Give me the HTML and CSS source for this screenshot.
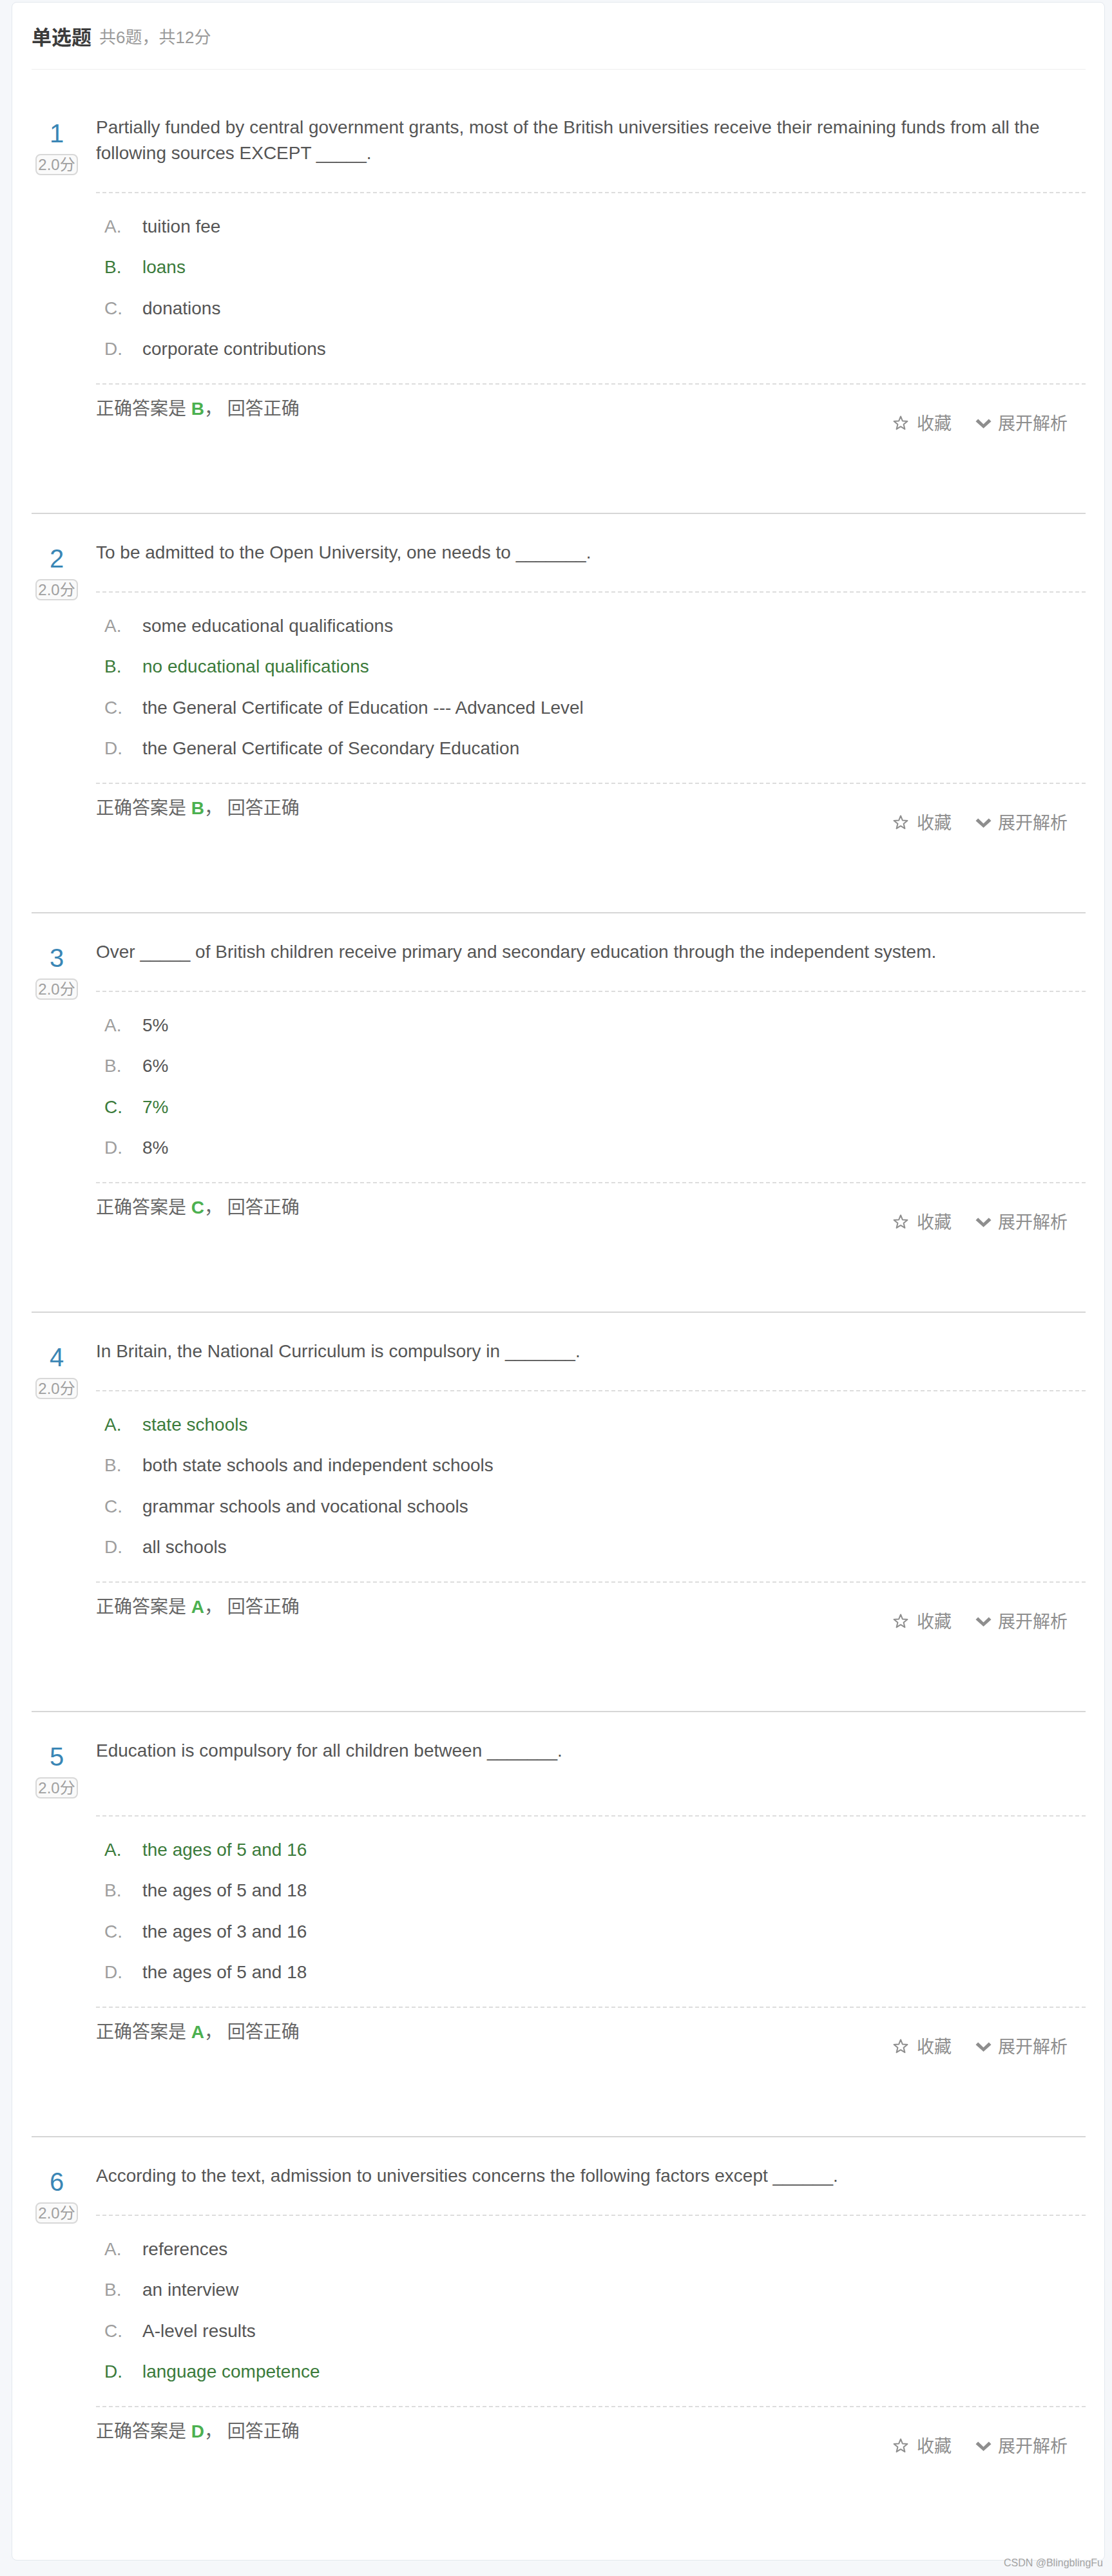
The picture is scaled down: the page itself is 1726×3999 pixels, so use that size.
FILE: index.html
```html
<!DOCTYPE html>
<html lang="zh-CN">
<head>
<meta charset="utf-8">
<title>单选题</title>
<link rel="stylesheet" href="styles.css">
</head>
<body>
<div class="card">
  <div class="sec-head"><span class="sec-title">单选题</span><span class="sec-sub">共6题，共12分</span></div>
  <div class="q-list">

    <div class="q">
      <div class="q-left"><div class="q-num">1</div><span class="q-score">2.0分</span></div>
      <div class="q-body">
        <div class="q-title">Partially funded by central government grants, most of the British universities receive their remaining funds from all the following sources EXCEPT _____.</div>
        <div class="dash"></div>
        <ul class="opts">
          <li class="opt"><span class="opt-k">A.</span>tuition fee</li>
          <li class="opt ok"><span class="opt-k">B.</span>loans</li>
          <li class="opt"><span class="opt-k">C.</span>donations</li>
          <li class="opt"><span class="opt-k">D.</span>corporate contributions</li>
        </ul>
        <div class="dash"></div>
        <div class="ans-row">
          <div class="ans">正确答案是 <b>B</b>， 回答正确</div>
          <div class="acts">
            <span class="act"><svg class="ic-star" viewBox="0 0 24 23"><polygon points="12,1.5 14.8,8.4 22.4,8.9 16.6,13.8 18.4,21.2 12,17.2 5.6,21.2 7.4,13.8 1.6,8.9 9.2,8.4" /></svg>收藏</span>
            <span class="act act2"><svg class="ic-chev" viewBox="0 0 25 15"><path d="M0.5 4.2 L4.2 0.5 L12.5 8.6 L20.8 0.5 L24.5 4.2 L12.5 15 Z" /></svg>展开解析</span>
          </div>
        </div>
      </div>
    </div>

    <div class="q">
      <div class="q-left"><div class="q-num">2</div><span class="q-score">2.0分</span></div>
      <div class="q-body">
        <div class="q-title">To be admitted to the Open University, one needs to _______.</div>
        <div class="dash"></div>
        <ul class="opts">
          <li class="opt"><span class="opt-k">A.</span>some educational qualifications</li>
          <li class="opt ok"><span class="opt-k">B.</span>no educational qualifications</li>
          <li class="opt"><span class="opt-k">C.</span>the General Certificate of Education --- Advanced Level</li>
          <li class="opt"><span class="opt-k">D.</span>the General Certificate of Secondary Education</li>
        </ul>
        <div class="dash"></div>
        <div class="ans-row">
          <div class="ans">正确答案是 <b>B</b>， 回答正确</div>
          <div class="acts">
            <span class="act"><svg class="ic-star" viewBox="0 0 24 23"><polygon points="12,1.5 14.8,8.4 22.4,8.9 16.6,13.8 18.4,21.2 12,17.2 5.6,21.2 7.4,13.8 1.6,8.9 9.2,8.4" /></svg>收藏</span>
            <span class="act act2"><svg class="ic-chev" viewBox="0 0 25 15"><path d="M0.5 4.2 L4.2 0.5 L12.5 8.6 L20.8 0.5 L24.5 4.2 L12.5 15 Z" /></svg>展开解析</span>
          </div>
        </div>
      </div>
    </div>

    <div class="q">
      <div class="q-left"><div class="q-num">3</div><span class="q-score">2.0分</span></div>
      <div class="q-body">
        <div class="q-title">Over _____ of British children receive primary and secondary education through the independent system.</div>
        <div class="dash"></div>
        <ul class="opts">
          <li class="opt"><span class="opt-k">A.</span>5%</li>
          <li class="opt"><span class="opt-k">B.</span>6%</li>
          <li class="opt ok"><span class="opt-k">C.</span>7%</li>
          <li class="opt"><span class="opt-k">D.</span>8%</li>
        </ul>
        <div class="dash"></div>
        <div class="ans-row">
          <div class="ans">正确答案是 <b>C</b>， 回答正确</div>
          <div class="acts">
            <span class="act"><svg class="ic-star" viewBox="0 0 24 23"><polygon points="12,1.5 14.8,8.4 22.4,8.9 16.6,13.8 18.4,21.2 12,17.2 5.6,21.2 7.4,13.8 1.6,8.9 9.2,8.4" /></svg>收藏</span>
            <span class="act act2"><svg class="ic-chev" viewBox="0 0 25 15"><path d="M0.5 4.2 L4.2 0.5 L12.5 8.6 L20.8 0.5 L24.5 4.2 L12.5 15 Z" /></svg>展开解析</span>
          </div>
        </div>
      </div>
    </div>

    <div class="q">
      <div class="q-left"><div class="q-num">4</div><span class="q-score">2.0分</span></div>
      <div class="q-body">
        <div class="q-title">In Britain, the National Curriculum is compulsory in _______.</div>
        <div class="dash"></div>
        <ul class="opts">
          <li class="opt ok"><span class="opt-k">A.</span>state schools</li>
          <li class="opt"><span class="opt-k">B.</span>both state schools and independent schools</li>
          <li class="opt"><span class="opt-k">C.</span>grammar schools and vocational schools</li>
          <li class="opt"><span class="opt-k">D.</span>all schools</li>
        </ul>
        <div class="dash"></div>
        <div class="ans-row">
          <div class="ans">正确答案是 <b>A</b>， 回答正确</div>
          <div class="acts">
            <span class="act"><svg class="ic-star" viewBox="0 0 24 23"><polygon points="12,1.5 14.8,8.4 22.4,8.9 16.6,13.8 18.4,21.2 12,17.2 5.6,21.2 7.4,13.8 1.6,8.9 9.2,8.4" /></svg>收藏</span>
            <span class="act act2"><svg class="ic-chev" viewBox="0 0 25 15"><path d="M0.5 4.2 L4.2 0.5 L12.5 8.6 L20.8 0.5 L24.5 4.2 L12.5 15 Z" /></svg>展开解析</span>
          </div>
        </div>
      </div>
    </div>

    <div class="q">
      <div class="q-left"><div class="q-num">5</div><span class="q-score">2.0分</span></div>
      <div class="q-body">
        <div class="q-title">Education is compulsory for all children between _______.<br>&nbsp;</div>
        <div class="dash"></div>
        <ul class="opts">
          <li class="opt ok"><span class="opt-k">A.</span>the ages of 5 and 16</li>
          <li class="opt"><span class="opt-k">B.</span>the ages of 5 and 18</li>
          <li class="opt"><span class="opt-k">C.</span>the ages of 3 and 16</li>
          <li class="opt"><span class="opt-k">D.</span>the ages of 5 and 18</li>
        </ul>
        <div class="dash"></div>
        <div class="ans-row">
          <div class="ans">正确答案是 <b>A</b>， 回答正确</div>
          <div class="acts">
            <span class="act"><svg class="ic-star" viewBox="0 0 24 23"><polygon points="12,1.5 14.8,8.4 22.4,8.9 16.6,13.8 18.4,21.2 12,17.2 5.6,21.2 7.4,13.8 1.6,8.9 9.2,8.4" /></svg>收藏</span>
            <span class="act act2"><svg class="ic-chev" viewBox="0 0 25 15"><path d="M0.5 4.2 L4.2 0.5 L12.5 8.6 L20.8 0.5 L24.5 4.2 L12.5 15 Z" /></svg>展开解析</span>
          </div>
        </div>
      </div>
    </div>

    <div class="q">
      <div class="q-left"><div class="q-num">6</div><span class="q-score">2.0分</span></div>
      <div class="q-body">
        <div class="q-title">According to the text, admission to universities concerns the following factors except ______.</div>
        <div class="dash"></div>
        <ul class="opts">
          <li class="opt"><span class="opt-k">A.</span>references</li>
          <li class="opt"><span class="opt-k">B.</span>an interview</li>
          <li class="opt"><span class="opt-k">C.</span>A-level results</li>
          <li class="opt ok"><span class="opt-k">D.</span>language competence</li>
        </ul>
        <div class="dash"></div>
        <div class="ans-row">
          <div class="ans">正确答案是 <b>D</b>， 回答正确</div>
          <div class="acts">
            <span class="act"><svg class="ic-star" viewBox="0 0 24 23"><polygon points="12,1.5 14.8,8.4 22.4,8.9 16.6,13.8 18.4,21.2 12,17.2 5.6,21.2 7.4,13.8 1.6,8.9 9.2,8.4" /></svg>收藏</span>
            <span class="act act2"><svg class="ic-chev" viewBox="0 0 25 15"><path d="M0.5 4.2 L4.2 0.5 L12.5 8.6 L20.8 0.5 L24.5 4.2 L12.5 15 Z" /></svg>展开解析</span>
          </div>
        </div>
      </div>
    </div>

  </div>
  <div class="watermark">CSDN @BlingblingFu</div>
</div>
</body>
</html>
```

FILE: styles.css
```css
* { box-sizing: border-box; }
html, body { margin: 0; padding: 0; }
body {
  background: #f5f7fa;
  font-family: "Liberation Sans", "Noto Sans CJK SC", sans-serif;
  color: #555;
  padding: 3px 11px 24px 18px;
}
.card {
  position: relative;
  background: #fff;
  border: 1px solid #e3e8ee;
  border-radius: 8px;
  padding: 0 29px 38px 30px;
}
.sec-head {
  height: 104px;
  display: flex;
  align-items: center;
  border-bottom: 1px solid #eeeeee;
}
.sec-title {
  font-size: 31px;
  font-weight: bold;
  color: #3c3c3c;
}
.sec-sub {
  font-size: 26px;
  color: #9a9a9a;
  margin-left: 12px;
}
.q-list { padding-top: 30px; }
.q {
  display: flex;
  padding: 40px 0 118px;
  border-bottom: 2px solid #d6d6d6;
}
.q:last-child { border-bottom: none; }
.q-left {
  width: 78px;
  flex: none;
  text-align: center;
}
.q-num {
  font-size: 40px;
  line-height: 44px;
  padding-top: 7px;
  color: #3a86b5;
}
.q-score {
  display: inline-block;
  margin-top: 10px;
  font-size: 24px;
  line-height: 27px;
  padding: 1px 2px;
  border: 2px solid #d8d8d8;
  border-radius: 8px;
  background: #fafafa;
  color: #a0a0a0;
}
.q-body {
  flex: 1;
  margin-left: 22px;
  min-width: 0;
}
.q-title {
  font-size: 28px;
  line-height: 40px;
  color: #555;
  padding-bottom: 40px;
}
.dash {
  height: 2px;
  background-image: linear-gradient(to right, #dddddd 0 6px, transparent 6px 10px);
  background-size: 10px 2px;
  background-repeat: repeat-x;
}
.opts {
  list-style: none;
  margin: 0;
  padding: 20px 0 21px;
}
.opt {
  font-size: 28px;
  line-height: 40px;
  padding: 11.75px 0 11.75px 13px;
  color: #555;
}
.opt-k {
  display: inline-block;
  width: 59px;
  color: #9e9e9e;
}
.opt.ok, .opt.ok .opt-k { color: #3b7b3b; }
.ans-row {
  display: flex;
  justify-content: space-between;
  align-items: flex-start;
  padding-top: 18px;
}
.ans {
  font-size: 28px;
  line-height: 40px;
  color: #666;
}
.ans b { color: #4cb050; }
.acts {
  display: flex;
  align-items: center;
  margin-top: 23px;
  margin-right: 28px;
  font-size: 27px;
  line-height: 40px;
  color: #8e8e8e;
}
.act {
  display: flex;
  align-items: center;
}
.act2 { margin-left: 37px; }
.ic-star {
  width: 24px;
  height: 23px;
  margin-right: 13px;
  margin-top: -4px;
  fill: none;
  stroke: #8e8e8e;
  stroke-width: 2;
  stroke-linejoin: round;
}
.ic-chev {
  width: 25px;
  height: 15px;
  margin-right: 10px;
  margin-top: -2px;
  fill: #8e8e8e;
}
.watermark {
  position: absolute;
  right: 2px;
  bottom: -14px;
  font-size: 16px;
  line-height: 18px;
  color: #a3a3a3;
  font-family: "Liberation Sans", sans-serif;
}
```
